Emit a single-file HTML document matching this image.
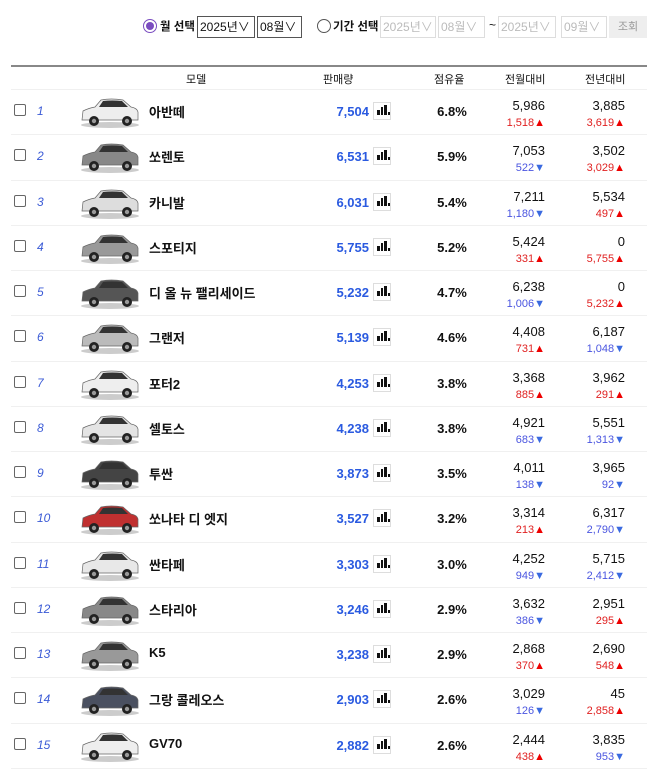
<!DOCTYPE html>
<html><head><meta charset="utf-8"><style>
*{margin:0;padding:0;box-sizing:border-box}
body{width:660px;height:770px;background:#fff;font-family:"Liberation Sans","Noto Sans CJK KR",sans-serif;color:#111;position:relative;overflow:hidden}
.abs{position:absolute}
.sel{position:absolute;top:16px;height:22px;border:1px solid #555;font-size:12px;line-height:20px;padding-left:2px;color:#111;white-space:nowrap;overflow:hidden}
.sel.dis{border-color:#ddd;color:#bbb}
.radio{position:absolute;top:19px;width:14px;height:14px;border-radius:50%;border:1px solid #555}
.lbl{position:absolute;top:18px;font-size:11.5px;font-weight:bold}
.hdr{position:absolute;top:65px;left:11px;width:636px;height:25px;border-top:2px solid #888;border-bottom:1px solid #f0f0f0;font-size:11px}
.hdr span{position:absolute;top:4px}
.row{position:absolute;left:11px;width:636px;height:45.25px;border-bottom:1px solid #f0f0f0}
.cb{position:absolute;left:3px;top:14px;width:12px;height:12px;border:1px solid #666;border-radius:2px}
.no{position:absolute;left:26px;top:14px;font-size:12px;font-style:italic;color:#3b5bd6}
.car{position:absolute;left:68px;top:5px}
.nm{position:absolute;left:138px;top:12px;font-size:13px;font-weight:bold}
.sa{position:absolute;right:278px;top:14px;font-size:13px;font-weight:bold;color:#2a5ae0}
.ic{position:absolute;left:362px;top:12px;width:18px;height:18px;border:1px solid #ddd}
.ic i{position:absolute;bottom:4px;width:2.5px;background:#111}
.sh{position:absolute;left:412px;width:58px;text-align:center;top:14px;font-size:13px;font-weight:bold}
.m1,.y1{position:absolute;top:8px;font-size:13px;text-align:right}
.m2,.y2{position:absolute;top:27px;font-size:11px;text-align:right}
.m1,.m2{right:102px}.y1,.y2{right:22px}
.up{color:#e02020}.dn{color:#4a55e0}
.up::after{content:"▲";color:#e00}
.dn::after{content:"▼";color:#3a6ae0}
</style></head><body>
<div class="radio" style="left:143px;border-color:#7a4cc0"><div style="position:absolute;left:2px;top:2px;width:8px;height:8px;border-radius:50%;background:#7a4cc0"></div></div>
<div class="lbl" style="left:160px">월 선택</div>
<div class="sel" style="left:197px;width:58px">2025년∨</div>
<div class="sel" style="left:257px;width:45px">08월∨</div>
<div class="radio" style="left:317px"></div>
<div class="lbl" style="left:333px">기간 선택</div>
<div class="sel dis" style="left:380px;width:56px">2025년∨</div>
<div class="sel dis" style="left:438px;width:47px">08월∨</div>
<div class="abs" style="left:489px;top:18px;font-size:12px">~</div>
<div class="sel dis" style="left:498px;width:58px">2025년∨</div>
<div class="sel dis" style="left:561px;width:46px">09월∨</div>
<div class="abs" style="left:609px;top:16px;width:38px;height:22px;background:#eee;color:#999;font-size:11px;text-align:center;line-height:22px">조회</div>
<div class="hdr"><span style="left:175px">모델</span><span style="left:312px">판매량</span><span style="left:423px">점유율</span><span style="left:494px">전월대비</span><span style="left:574px">전년대비</span></div>
<div id="rows"></div>
<script>
var d=[["아반떼","7,504","6.8%","5,986","1,518",1,"3,885","3,619",1,"#eee"],
["쏘렌토","6,531","5.9%","7,053","522",0,"3,502","3,029",1,"#888"],
["카니발","6,031","5.4%","7,211","1,180",0,"5,534","497",1,"#ddd"],
["스포티지","5,755","5.2%","5,424","331",1,"0","5,755",1,"#999"],
["디 올 뉴 팰리세이드","5,232","4.7%","6,238","1,006",0,"0","5,232",1,"#555"],
["그랜저","5,139","4.6%","4,408","731",1,"6,187","1,048",0,"#bbb"],
["포터2","4,253","3.8%","3,368","885",1,"3,962","291",1,"#eee"],
["셀토스","4,238","3.8%","4,921","683",0,"5,551","1,313",0,"#e4e4e4"],
["투싼","3,873","3.5%","4,011","138",0,"3,965","92",0,"#444"],
["쏘나타 디 엣지","3,527","3.2%","3,314","213",1,"6,317","2,790",0,"#c03030"],
["싼타페","3,303","3.0%","4,252","949",0,"5,715","2,412",0,"#e8e8e8"],
["스타리아","3,246","2.9%","3,632","386",0,"2,951","295",1,"#888"],
["K5","3,238","2.9%","2,868","370",1,"2,690","548",1,"#999"],
["그랑 콜레오스","2,903","2.6%","3,029","126",0,"45","2,858",1,"#4a5060"],
["GV70","2,882","2.6%","2,444","438",1,"3,835","953",0,"#eee"]];
var h="";
d.forEach(function(r,i){
var t=90+i*45.25;
h+='<div class="row" style="top:'+t+'px"><div class="cb"></div><div class="no">'+(i+1)+'</div>'+
'<svg class="car" width="62" height="34" viewBox="0 0 62 34"><ellipse cx="31" cy="30" rx="29" ry="3" fill="#ccc"/><path d="M3 25 L4 16 Q10 13 16 12 L22 5 Q32 3 44 5 L52 12 Q58 13 59 17 L59 25 Z" fill="'+r[9]+'" stroke="#666" stroke-width="0.7"/><path d="M20 12 L24 6 Q33 5 43 6 L49 12 Z" fill="#333"/><circle cx="15" cy="26" r="5" fill="#222"/><circle cx="48" cy="26" r="5" fill="#222"/><circle cx="15" cy="26" r="2.2" fill="#999"/><circle cx="48" cy="26" r="2.2" fill="#999"/></svg>'+
'<div class="nm">'+r[0]+'</div><div class="sa">'+r[1]+'</div><div class="ic"><i style="left:3px;height:5px"></i><i style="left:6.5px;height:8px"></i><i style="left:10px;height:10px"></i><i style="left:13.5px;height:3px"></i></div>'+
'<div class="sh">'+r[2]+'</div><div class="m1">'+r[3]+'</div><div class="m2 '+(r[5]?'up':'dn')+'">'+r[4]+'</div>'+
'<div class="y1">'+r[6]+'</div><div class="y2 '+(r[8]?'up':'dn')+'">'+r[7]+'</div></div>';
});
document.getElementById("rows").innerHTML=h;
</script>
</body></html>
